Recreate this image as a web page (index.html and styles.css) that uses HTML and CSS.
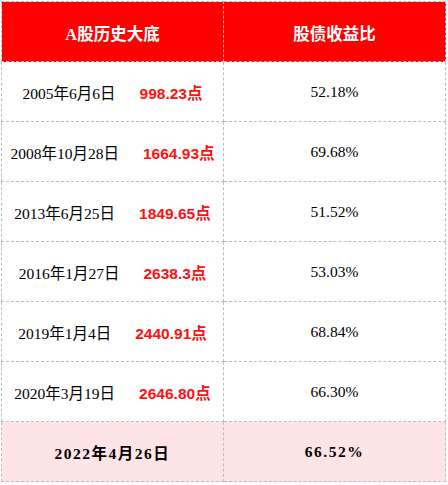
FILE: index.html
```html
<!DOCTYPE html>
<html lang="zh-CN">
<head>
<meta charset="utf-8">
<title>A股历史大底 股债收益比</title>
<link rel="stylesheet" href="styles.css">
</head>
<body>
<div class="wrap">
<table class="bond-table">
  <thead>
    <tr>
      <th>A股历史大底</th>
      <th>股债收益比</th>
    </tr>
  </thead>
  <tbody>
    <tr>
      <td><span class="date">2005年6月6日</span><span class="pts">998.23点</span></td>
      <td><span class="ratio">52.18%</span></td>
    </tr>
    <tr>
      <td><span class="date">2008年10月28日</span><span class="pts">1664.93点</span></td>
      <td><span class="ratio">69.68%</span></td>
    </tr>
    <tr>
      <td><span class="date">2013年6月25日</span><span class="pts">1849.65点</span></td>
      <td><span class="ratio">51.52%</span></td>
    </tr>
    <tr>
      <td><span class="date">2016年1月27日</span><span class="pts">2638.3点</span></td>
      <td><span class="ratio">53.03%</span></td>
    </tr>
    <tr>
      <td><span class="date">2019年1月4日</span><span class="pts">2440.91点</span></td>
      <td><span class="ratio">68.84%</span></td>
    </tr>
    <tr>
      <td><span class="date">2020年3月19日</span><span class="pts">2646.80点</span></td>
      <td><span class="ratio">66.30%</span></td>
    </tr>
    <tr class="current">
      <td><span class="date">2022年4月26日</span></td>
      <td><span class="ratio">66.52%</span></td>
    </tr>
  </tbody>
</table>
</div>
</body>
</html>
```

FILE: styles.css
```css
html, body {
  margin: 0;
  padding: 0;
  background: #ffffff;
}

.wrap {
  padding: 1px 0 0 1px;
}

.bond-table {
  width: 445px;
  border-collapse: collapse;
  table-layout: fixed;
  font-family: "Liberation Serif", "Noto Sans CJK SC", serif;
  font-size: 15.5px;
  color: #000000;
}

.bond-table th,
.bond-table td {
  width: 50%;
  height: 59px;
  padding: 0;
  border: 1px dashed #bdbdbd;
  text-align: center;
  vertical-align: middle;
  white-space: nowrap;
}

.bond-table th {
  background: #ff0000;
  color: #ffffff;
  font-size: 16.5px;
  font-weight: bold;
  padding-top: 3px;
  height: 56px;
}

.pts {
  margin-left: 24px;
  font-family: "Liberation Sans", "Noto Sans CJK SC", sans-serif;
  font-weight: bold;
  color: #ff1010;
}

.current td {
  background: #ffe4e7;
  font-weight: bold;
  letter-spacing: 1.5px;
}
```
